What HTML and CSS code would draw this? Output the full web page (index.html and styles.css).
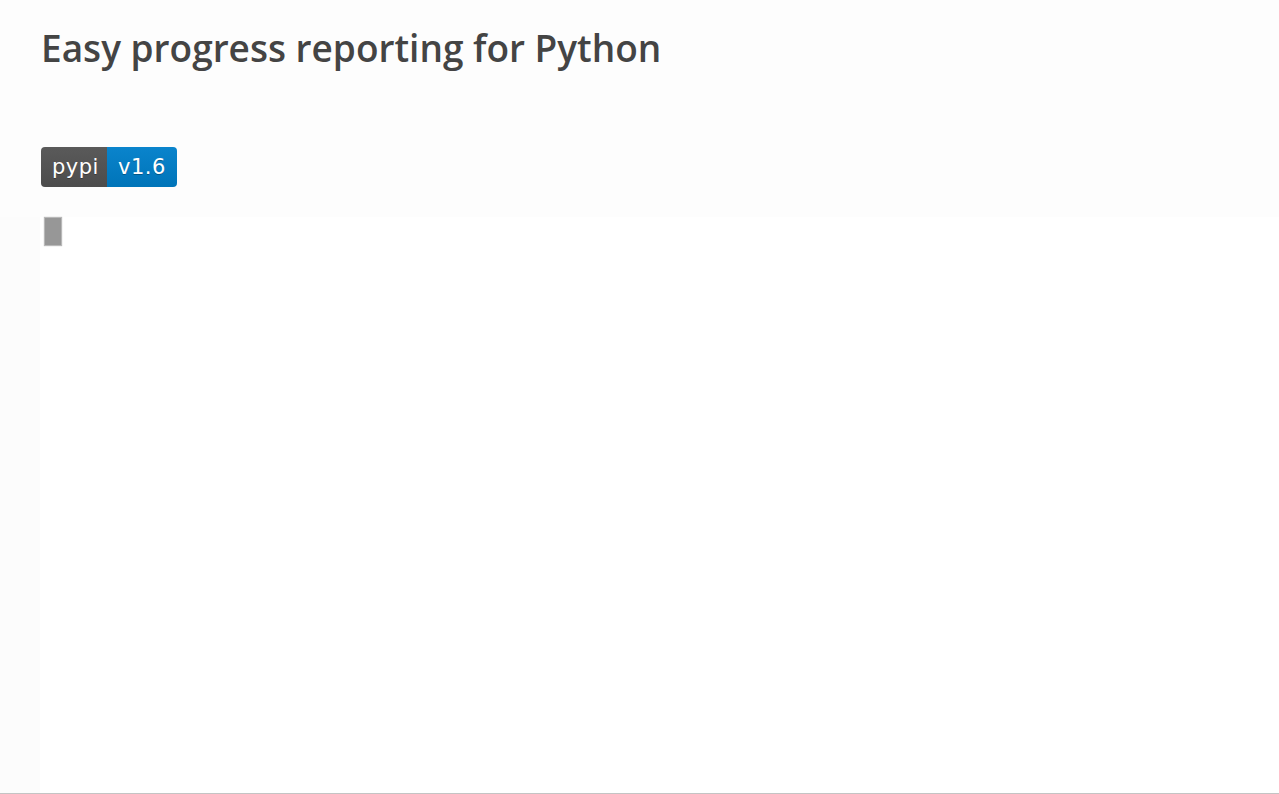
FILE: index.html
```html
<!DOCTYPE html>
<html>
<head>
<meta charset="utf-8">
<link rel="stylesheet" href="styles.css">
</head>
<body>
<div class="page">
  <header class="top">
    <h1 class="title">Easy progress reporting for Python</h1>
    <div class="badge"><span class="badge-label">pypi</span><span class="badge-value">v1.6</span></div>
  </header>
  <div class="main">
    <div class="gutter"></div>
    <div class="content">
      <div class="cursor"></div>
    </div>
  </div>
</div>
</body>
</html>
```

FILE: styles.css
```css
html, body {
  margin: 0;
  padding: 0;
  height: 100%;
}
body {
  background: #ffffff;
  font-family: "Open Sans", "DejaVu Sans", sans-serif;
}
.page {
  height: 794px;
  display: flex;
  flex-direction: column;
  box-sizing: border-box;
  border-bottom: 1px solid #c4c4c4;
}
.top {
  background: #fdfdfd;
  height: 217px;
  padding: 0 0 0 41px;
  box-sizing: border-box;
  display: flex;
  flex-direction: column;
  align-items: flex-start;
}
.title {
  margin: 23px 0 0 0;
  font-size: 37px;
  line-height: 50px;
  font-weight: 600;
  color: #444444;
  letter-spacing: 0;
}
.badge {
  margin-top: 74px;
  display: flex;
  height: 40px;
  border-radius: 4px;
  overflow: hidden;
  font-family: "DejaVu Sans", Verdana, sans-serif;
  font-size: 21px;
  letter-spacing: 0.5px;
  color: #ffffff;
  text-shadow: 0 1px 0 rgba(1, 1, 1, 0.3);
}
.badge-label, .badge-value {
  display: flex;
  align-items: center;
  justify-content: center;
  height: 40px;
  box-sizing: border-box;
}
.badge-label {
  width: 66px;
  padding-left: 3px;
  background: linear-gradient(#5a5a5a, #4c4c4c);
}
.badge-value {
  width: 70px;
  background: linear-gradient(#0a84cc, #0074b8);
}
.main {
  flex: 1;
  display: flex;
}
.gutter {
  width: 40px;
  background: #fcfcfc;
}
.content {
  flex: 1;
  background: #ffffff;
  padding: 1px 0 0 5px;
}
.cursor {
  width: 16px;
  height: 27px;
  background: #979797;
  box-shadow: 0 0 1px 1px #b8b8b8;
}
```
